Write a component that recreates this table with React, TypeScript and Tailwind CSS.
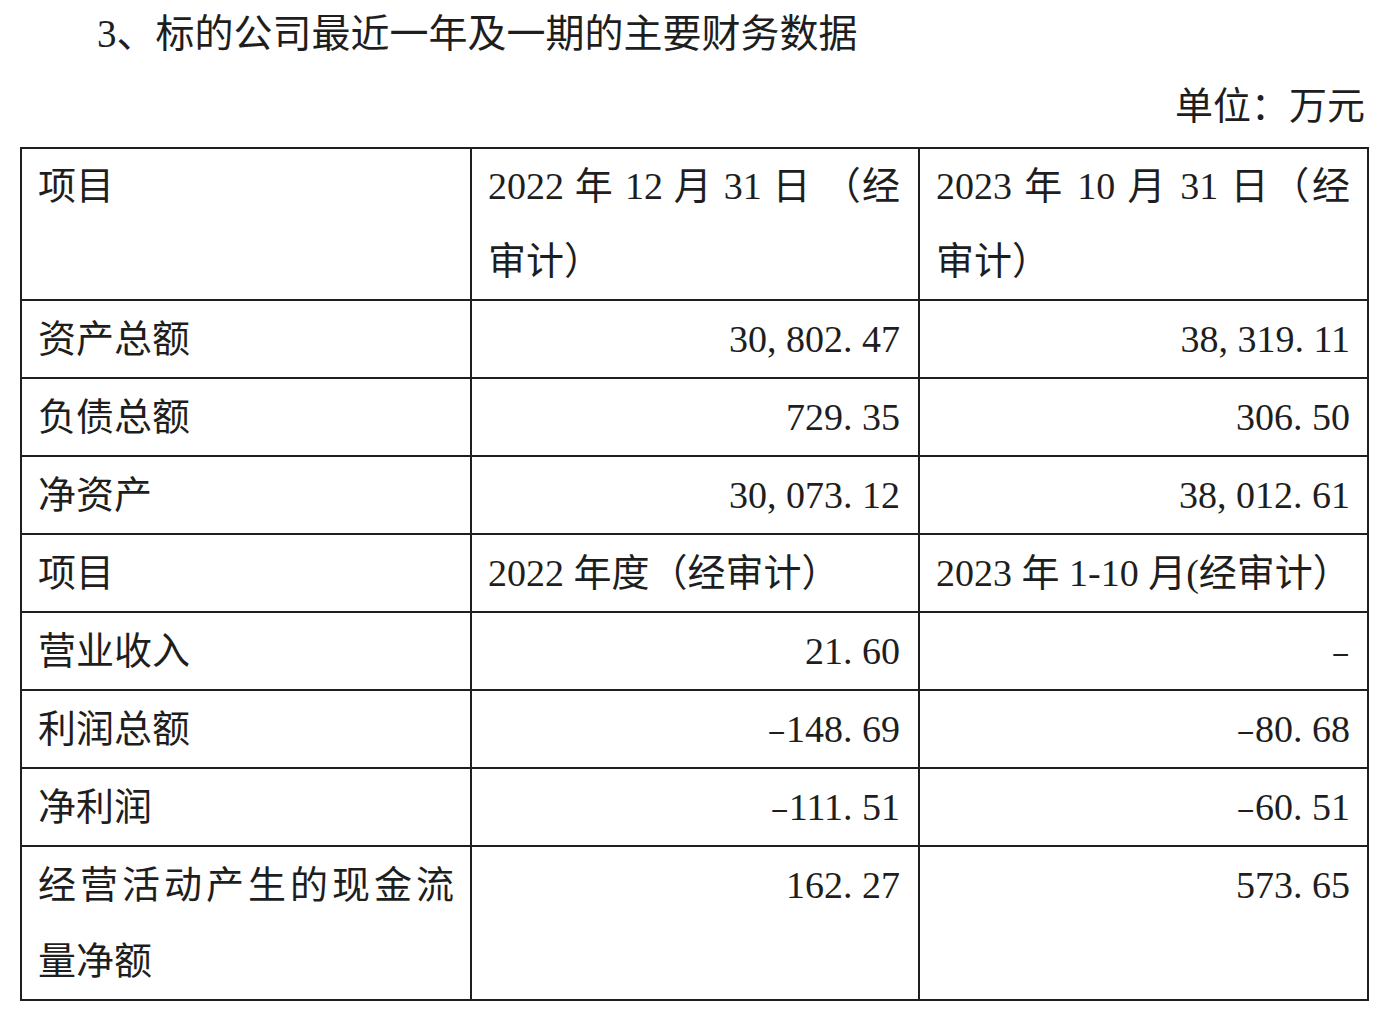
import React from "react";

const FONT = '"Liberation Serif", "Noto Sans CJK SC", serif';

function Num({ v }: { v: string }) {
  return (
    <span>
      {v.split("").map((c, i) =>
        c === "," || c === "." ? (
          <span key={i} className="inline-block w-[19px] text-left">
            {c}
          </span>
        ) : c === "-" ? (
          <span key={i} className="inline-block w-[19px] scale-x-[0.75] text-center">
            –
          </span>
        ) : (
          <span key={i}>{c}</span>
        )
      )}
    </span>
  );
}

const tdBase = "border-2 border-[#1f1f1f] align-top leading-[76px] p-0";
const tdHead = "border-2 border-[#1f1f1f] align-top leading-[75px] p-0";

function Row({ label, a, b }: { label: string; a: string; b: string }) {
  return (
    <tr>
      <td className={`${tdBase} pl-[16px]`}>{label}</td>
      <td className={`${tdBase} pr-[18px] text-right`}>
        <Num v={a} />
      </td>
      <td className={`${tdBase} pr-[17px] text-right`}>
        <Num v={b} />
      </td>
    </tr>
  );
}

export default function App() {
  return (
    <div className="min-h-screen bg-white text-[#1e1e1e]" style={{ fontFamily: FONT }}>
      <div className="h-[68px] pl-[97px] text-[39px] leading-[68px]">3、标的公司最近一年及一期的主要财务数据</div>
      <div className="h-[76px] pr-[34px] text-right text-[38px] leading-[76px]">单位：万元</div>
      <table className="ml-[20px] mt-[3px] w-[1347px] table-fixed border-collapse text-[38px]">
        <colgroup>
          <col className="w-[450px]" />
          <col className="w-[448px]" />
          <col className="w-[449px]" />
        </colgroup>
        <tbody>
          <tr>
            <td className={`${tdHead} pl-[16px]`}>项目</td>
            <td className={`${tdHead} pl-[16px] pr-[18px]`}>
              <div className="text-justify [text-align-last:justify]">2022 年 12 月 31 日 （经</div>
              <div>审计）</div>
            </td>
            <td className={`${tdHead} pl-[16px] pr-[17px]`}>
              <div className="text-justify [text-align-last:justify]">2023 年 10 月 31 日（经</div>
              <div>审计）</div>
            </td>
          </tr>
          <Row label="资产总额" a="30,802.47" b="38,319.11" />
          <Row label="负债总额" a="729.35" b="306.50" />
          <Row label="净资产" a="30,073.12" b="38,012.61" />
          <tr>
            <td className={`${tdBase} pl-[16px]`}>项目</td>
            <td className={`${tdBase} pl-[16px]`}>2022 年度（经审计）</td>
            <td className={`${tdBase} pl-[16px]`}>2023 年 1-10 月(经审计）</td>
          </tr>
          <Row label="营业收入" a="21.60" b="-" />
          <Row label="利润总额" a="-148.69" b="-80.68" />
          <Row label="净利润" a="-111.51" b="-60.51" />
          <tr>
            <td className={`${tdBase} pl-[16px] pr-[16px]`}>
              <div className="text-justify [text-align-last:justify]">经营活动产生的现金流</div>
              <div>量净额</div>
            </td>
            <td className={`${tdBase} pr-[18px] text-right`}>
              <Num v="162.27" />
            </td>
            <td className={`${tdBase} pr-[17px] text-right`}>
              <Num v="573.65" />
            </td>
          </tr>
        </tbody>
      </table>
    </div>
  );
}
